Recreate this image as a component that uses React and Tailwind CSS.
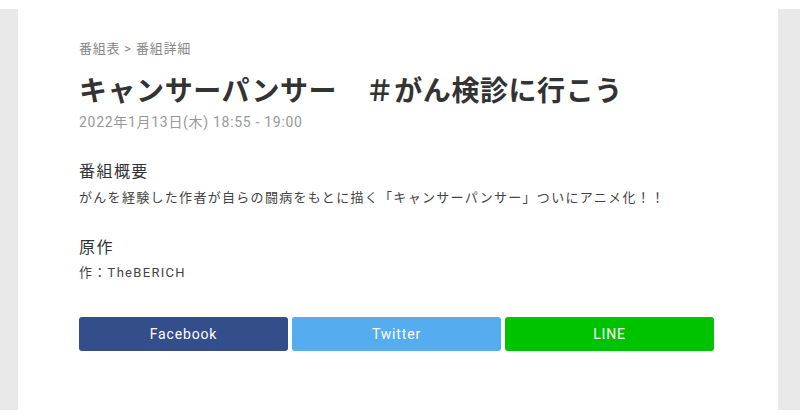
export default function App() {
  const font = { fontFamily: 'Roboto, "Noto Sans CJK JP", sans-serif' };
  return (
    <div className="w-[800px] h-[419px] bg-white pt-[9px]" style={font}>
      <div className="h-[401px] bg-[#e9e9e9] pl-[18px] pr-[22px]">
        <div className="h-full bg-white pl-[61px] pt-[30px]">
          <div className="text-[13px] leading-[20px] tracking-[0.06em] text-[#888]">
            番組表 &gt; 番組詳細
          </div>
          <h1 className="mt-[13px] text-[28px] leading-[40px] font-bold text-[#333] tracking-[0.02em]">
            キャンサーパンサー　＃がん検診に行こう
          </h1>
          <div className="text-[14px] leading-[20px] text-[#999] tracking-[0.05em]">
            2022年1月13日(木) 18:55 - 19:00
          </div>
          <h2 className="mt-[27px] text-[16px] leading-[26px] text-[#333] tracking-[0.09em]">
            番組概要
          </h2>
          <p className="mt-[2px] text-[13px] leading-[22px] text-[#444] tracking-[0.1em]">
            がんを経験した作者が自らの闘病をもとに描く「キャンサーパンサー」ついにアニメ化！！
          </p>
          <h2 className="mt-[26px] text-[16px] leading-[26px] text-[#333] tracking-[0.09em]">
            原作
          </h2>
          <p className="mt-[1px] text-[13px] leading-[22px] text-[#444] tracking-[0.1em]">
            作：TheBERICH
          </p>
          <div className="mt-[33px] grid grid-cols-3 gap-1 w-[635px]">
            <div className="h-[34px] rounded-[3px] bg-[#344e8b] text-white text-[14px] tracking-[0.06em] flex items-center justify-center">
              Facebook
            </div>
            <div className="h-[34px] rounded-[3px] bg-[#55acee] text-white text-[14px] tracking-[0.06em] flex items-center justify-center">
              Twitter
            </div>
            <div className="h-[34px] rounded-[3px] bg-[#00c300] text-white text-[14px] tracking-[0.06em] flex items-center justify-center">
              LINE
            </div>
          </div>
        </div>
      </div>
    </div>
  );
}
